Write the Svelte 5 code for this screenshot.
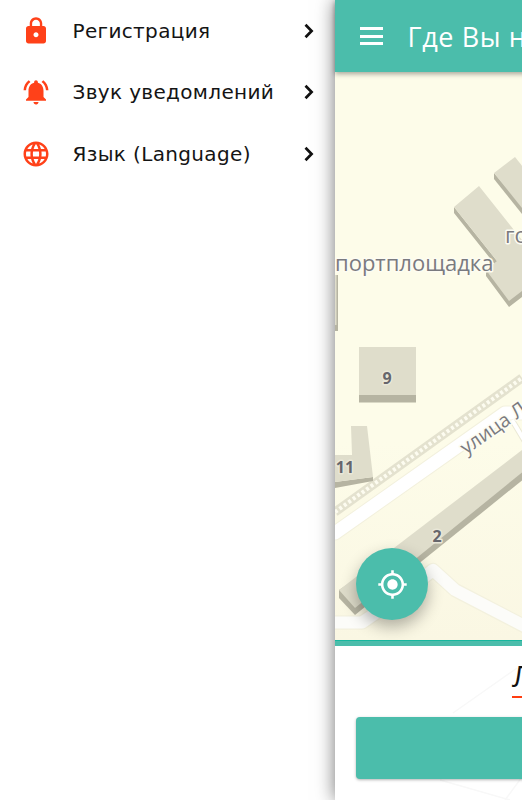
<script>
  const items = [
    { label: 'Регистрация', d: 'M18 8h-1V6c0-2.76-2.24-5-5-5S7 3.24 7 6v2H6c-1.1 0-2 .9-2 2v10c0 1.1.9 2 2 2h12c1.1 0 2-.9 2-2V10c0-1.1-.9-2-2-2zm-6 9c-1.1 0-2-.9-2-2s.9-2 2-2 2 .9 2 2-.9 2-2 2zm3.1-9H8.9V6c0-1.71 1.39-3.1 3.1-3.1 1.71 0 3.1 1.39 3.1 3.1v2z' },
    { label: 'Звук уведомлений', d: 'M7.58 4.08L6.15 2.65C3.75 4.48 2.17 7.3 2.03 10.5h2c.15-2.65 1.51-4.97 3.55-6.42zm12.39 6.42h2c-.15-3.2-1.73-6.02-4.12-7.85l-1.42 1.43c2.02 1.45 3.39 3.77 3.54 6.42zM18 11c0-3.07-1.64-5.64-4.5-6.32V4c0-.83-.67-1.5-1.5-1.5s-1.5.67-1.5 1.5v.68C7.63 5.36 6 7.92 6 11v5l-2 2v1h16v-1l-2-2v-5zm-6 11c.14 0 .27-.01.4-.04.65-.14 1.18-.58 1.44-1.18.1-.24.15-.5.15-.78h-4c.01 1.1.9 2 2.01 2z' },
    { label: 'Язык (Language)', d: 'M11.99 2C6.47 2 2 6.48 2 12s4.47 10 9.99 10C17.52 22 22 17.52 22 12S17.52 2 11.99 2zm6.93 6h-2.95c-.32-1.25-.78-2.45-1.38-3.56 1.84.63 3.37 1.91 4.33 3.56zM12 4.04c.83 1.2 1.48 2.53 1.91 3.96h-3.82c.43-1.43 1.08-2.76 1.91-3.96zM4.26 14C4.1 13.36 4 12.69 4 12s.1-1.36.26-2h3.38c-.08.66-.14 1.32-.14 2 0 .68.06 1.34.14 2H4.26zm.82 2h2.95c.32 1.25.78 2.45 1.38 3.56-1.84-.63-3.37-1.9-4.33-3.56zm2.95-8H5.08c.96-1.66 2.49-2.93 4.33-3.56C8.81 5.55 8.35 6.75 8.03 8zM12 19.96c-.83-1.2-1.48-2.53-1.91-3.96h3.82c-.43 1.43-1.08 2.76-1.91 3.96zM14.34 14H9.66c-.09-.66-.16-1.32-.16-2 0-.68.07-1.35.16-2h4.68c.09.65.16 1.32.16 2 0 .68-.07 1.34-.16 2zm.25 5.56c.6-1.11 1.06-2.31 1.38-3.56h2.95c-.96 1.65-2.49 2.93-4.33 3.56zM16.36 14c.08-.66.14-1.32.14-2 0-.68-.06-1.34-.14-2h3.38c.16.64.26 1.31.26 2s-.1 1.36-.26 2h-3.38z' }
  ];
</script>

<div class="screen">
  <aside class="drawer">
    <ul class="menu">
      {#each items as item}
        <li class="row">
          <svg class="icon" viewBox="0 0 24 24"><path d={item.d} /></svg>
          <span class="label">{item.label}</span>
          <svg class="chev" viewBox="0 0 12 16"><path d="M2.5 1.800 8.600 8l-6.100 6.200" /></svg>
        </li>
      {/each}
    </ul>
  </aside>

  <main class="main">
    <header class="bar">
      <span class="burger"><i></i><i></i><i></i></span>
      <h1 class="title">Где Вы находитесь?</h1>
    </header>

    <div class="map">
      <svg class="tiles" viewBox="335 72 522 568" width="522" height="568">
        <defs>
          <linearGradient id="ground" x1="0" y1="0" x2="0" y2="1">
            <stop offset="0.65" stop-color="#fdfce9" />
            <stop offset="1" stop-color="#faf7e3" />
          </linearGradient>
        </defs>
        <rect x="335" y="72" width="522" height="568" fill="url(#ground)" />
        <path d="M335 512 522 378" class="rail" />
        <path d="M335 512 522 378" class="rail-dots" />
        <path d="M335 533 505 413H530" class="road-edge" />
        <path d="M335 533 505 413H530" class="road" />
        <path d="M512 420 530 450" class="lane-edge" />
        <path d="M512 420 530 450" class="lane" />
        <path d="M335 622.500H362L395 600 433 570 455 590 530 629" class="road-edge low" />
        <path d="M335 622.500H362L395 600 433 570 455 590 530 629" class="road low" />

        <path d="M335 275h3v56h-3z" class="side" />
        <path d="M335 275h1.500v50h-1.500z" class="top" />

        <path d="M454 207v6l43 54v-6zM486 270v6l23 31 21-16v-6z" class="side" />
        <path d="M454 207 479 186 530 250V285L509 301 486 270 497 261z" class="top" />
        <path d="M494 173v6l28 35 8 9v-8z" class="side" />
        <path d="M494 173 515 157 530 176V215L522 208z" class="top" />

        <path d="M359 395h57v7.500h-57z" class="side" />
        <path d="M359 347h57v48h-57z" class="top" />

        <path d="M335 482 373 477v4L335 488z" class="side" />
        <path d="M351 426h16l6 51-38 5v-27h17z" class="top" />

        <path d="M339 590v8l16 17 175-141v-8z" class="side" />
        <path d="M339 590 530 444v22L355 608z" class="top" />

        <g class="tag">
          <text x="335" y="271" class="big">портплощадка</text>
          <text x="505" y="243" class="big">гостиница</text>
          <text x="387" y="384" class="num" text-anchor="middle">9</text>
          <text x="345" y="473" class="num" text-anchor="middle">11</text>
          <text x="437" y="542" class="num" text-anchor="middle">2</text>
          <text transform="translate(466 455) rotate(-35)" class="street">улица Ленина</text>
        </g>
      </svg>

      <button class="fab" aria-label="Моё местоположение">
        <svg viewBox="0 0 24 24"><path d="M12 8c-2.210 0-4 1.790-4 4s1.790 4 4 4 4-1.790 4-4-1.790-4-4-4zm8.940 3c-.46-4.170-3.770-7.480-7.940-7.940V1h-2v2.060C6.830 3.520 3.520 6.830 3.060 11H1v2h2.060c.46 4.170 3.770 7.480 7.940 7.940V23h2v-2.060c4.170-.46 7.480-3.770 7.940-7.940H23v-2h-2.060zM12 19c-3.870 0-7-3.130-7-7s3.130-7 7-7 7 3.130 7 7-3.130 7-7 7z" /></svg>
      </button>
    </div>

    <div class="strip"></div>

    <section class="panel">
      <svg class="pattern" viewBox="335 646 522 154" width="522" height="154" aria-hidden="true">
        <path d="M453 713 517 668M440 780 510 800M522 777 505 800" />
      </svg>
      <div class="address"><span>Ленина, 2</span></div>
      <button class="confirm"></button>
    </section>
  </main>
</div>

<style>
  :global(body) { margin: 0; background: #fff; }
  .screen { display: flex; width: 522px; height: 800px; overflow: hidden; background: #fff; }
  .drawer { flex: 0 0 335px; }
  .menu { list-style: none; margin: 0; padding: 0; }
  .row { display: flex; align-items: center; height: 61.500px; font-family: "DejaVu Sans", sans-serif; font-size: 20px; letter-spacing: .35px; color: #141414; }
  .icon { flex: none; width: 30px; height: 30px; margin: 0 21.500px 0 21px; fill: #ff4119; }
  .label { flex: 1; white-space: nowrap; }
  .chev { flex: none; width: 12px; height: 16px; margin-right: 20px; fill: none; stroke: #111; stroke-width: 2.700; }

  .main { flex: 0 0 522px; display: flex; flex-direction: column; height: 800px; box-shadow: 0 0 18px rgba(0,0,0,.55); position: relative; }
  .bar { flex: 0 0 72px; display: flex; align-items: center; background: #4bbdab; box-shadow: 0 2px 5px rgba(0,0,0,.35); position: relative; z-index: 2; }
  .burger { display: flex; flex-direction: column; gap: 4.500px; margin: 0 24.500px 0 25px; width: 23px; }
  .burger i { display: block; height: 3px; background: #fff; }
  .title { margin: 0; font-family: "Open Sans", "Noto Sans", sans-serif; font-weight: 400; font-size: 27px; letter-spacing: .6px; color: #fff; white-space: nowrap; }

  .map { flex: 0 0 568px; position: relative; overflow: hidden; }
  .tiles { display: block; }
  .rail { fill: none; stroke: #e4e2cf; stroke-width: 9; }
  .rail-dots { fill: none; stroke: #fdfcf0; stroke-width: 4; stroke-dasharray: 3 2.500; }
  .road { fill: none; stroke: #fff; stroke-width: 13; stroke-linejoin: round; stroke-linecap: round; }
  .road-edge { fill: none; stroke: #f3f1de; stroke-width: 15; stroke-linejoin: round; stroke-linecap: round; }
  .road.low { stroke: #fcfcf9; stroke-width: 12; }
  .road-edge.low { stroke-width: 14.500; }
  .lane { fill: none; stroke: #fff; stroke-width: 4; }
  .lane-edge { fill: none; stroke: #ebe9d6; stroke-width: 6; }
  .side { fill: #b6b4a2; }
  .top { fill: #dfddcb; }
  .tag text { font-family: "Open Sans", "Noto Sans", sans-serif; font-weight: 500; fill: #7a7a7f; stroke: #fdfcf2; stroke-width: 3px; paint-order: stroke; stroke-linejoin: round; }
  .big { font-size: 22px; }
  .tag .num { font-size: 16px; font-weight: 700; fill: #66666c; stroke: #e9e7d8; }
  .street { font-size: 19.500px; }

  .fab { position: absolute; left: 21px; top: 476px; width: 72px; height: 72px; padding: 0; border: 0; border-radius: 50%; background: #4bbdab; box-shadow: 0 7px 16px rgba(0,0,0,.3); display: flex; align-items: center; justify-content: center; }
  .fab svg { width: 31px; height: 31px; fill: #fff; }

  .strip { flex: 0 0 6px; background: #4bbdab; border-top: 1.500px solid #17b79e; box-sizing: border-box; }
  .panel { flex: 1; background: #fff; padding: 0 21px; position: relative; }
  .pattern { position: absolute; left: 0; top: 0; fill: none; stroke: #f8f8f8; stroke-width: 1.500; }
  .address { position: relative; padding-left: 156px; height: 71px; box-sizing: border-box; padding-top: 9px; font-family: "Open Sans", "Noto Sans", sans-serif; font-size: 30px; color: #111; }
  .address span { display: inline-block; border-bottom: 2px solid #ff3d10; line-height: 41px; white-space: nowrap; }
  .confirm { display: block; position: relative; width: 480px; height: 62px; border: 0; border-radius: 4px; background: #4bbdab; box-shadow: 0 1px 3px rgba(0,0,0,.3); }
</style>
